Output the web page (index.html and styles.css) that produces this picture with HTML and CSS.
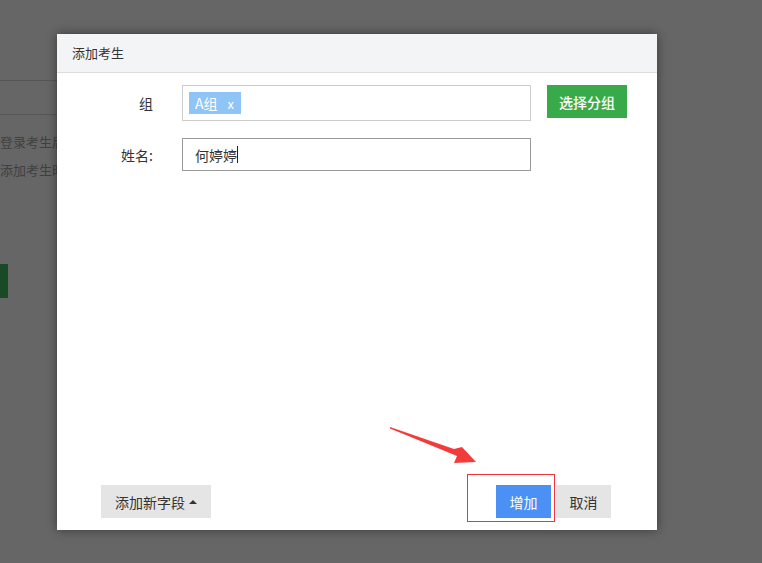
FILE: index.html
```html
<!DOCTYPE html>
<html lang="zh">
<head>
<meta charset="utf-8">
<link rel="stylesheet" href="styles.css">
</head>
<body>
<div class="page">
  <div class="bg-line bg-line-1"></div>
  <div class="bg-line bg-line-2"></div>
  <p class="bg-text bg-text-1">登录考生后台</p>
  <p class="bg-text bg-text-2">添加考生时间</p>
  <div class="bg-btn"></div>
</div>

<div class="modal">
  <div class="modal-header">添加考生</div>
  <div class="modal-body">
    <div class="form">
      <label class="label">组</label>
      <div class="input tags">
        <span class="tag">A组<span class="tag-x">x</span></span>
      </div>
      <button class="btn btn-green">选择分组</button>

      <label class="label">姓名:</label>
      <div class="input text-input">何婷婷<span class="caret"></span></div>
      <span></span>
    </div>
  </div>
  <div class="modal-footer">
    <button class="btn btn-gray">添加新字段<span class="tri"></span></button>
    <div class="actions">
      <button class="btn btn-blue">增加</button>
      <button class="btn btn-gray btn-cancel">取消</button>
    </div>
  </div>
</div>

<div class="highlight"></div>
<svg class="arrow" width="100" height="50" viewBox="0 0 100 50">
  <polygon points="0,1 64,23 72,21 86,36 64,37 67,30 0,2.5" fill="#f23c3c"/>
</svg>
</body>
</html>
```

FILE: styles.css
```css
* { box-sizing: border-box; }
html, body {
  margin: 0;
  padding: 0;
  width: 762px;
  height: 563px;
  overflow: hidden;
  background: #666666;
  font-family: "Noto Sans CJK SC", "Noto Sans", sans-serif;
}
.page {
  position: absolute;
  inset: 0;
}
.bg-line {
  position: absolute;
  left: 0;
  width: 100px;
  height: 1px;
  background: #565656;
}
.bg-line-1 { top: 80px; }
.bg-line-2 { top: 114px; }
.bg-text {
  position: absolute;
  left: 0;
  margin: 0;
  font-size: 13px;
  line-height: 18px;
  color: #404040;
  white-space: nowrap;
}
.bg-text-1 { top: 133px; }
.bg-text-2 { top: 161px; }
.bg-btn {
  position: absolute;
  left: 0;
  top: 264px;
  width: 8px;
  height: 34px;
  background: #1a4a25;
}

.modal {
  position: absolute;
  left: 57px;
  top: 34px;
  width: 600px;
  height: 496px;
  background: #fff;
  box-shadow: 0 0 10px rgba(0,0,0,0.45);
  display: flex;
  flex-direction: column;
}
.modal-header {
  height: 39px;
  background: #f3f4f6;
  border-bottom: 1px solid #dcdcdc;
  padding: 0 15px;
  font-size: 13px;
  line-height: 38px;
  color: #333;
}
.modal-body {
  flex: 1;
  padding-top: 12px;
}
.form {
  display: grid;
  grid-template-columns: 96px 349px 80px;
  grid-template-rows: 36px 33px;
  column-gap: 29px;
  row-gap: 17px;
}
.form .btn-green { margin-left: -13px; }
.label {
  text-align: right;
  font-size: 14px;
  color: #333;
  align-self: center;
}
.input {
  border: 1px solid #cccccc;
  background: #fff;
  display: flex;
  align-items: center;
}
.tags { padding-left: 6px; }
.tag {
  display: inline-flex;
  align-items: center;
  height: 22px;
  width: 52px;
  padding-left: 6px;
  background: #8ec5f6;
  color: #fff;
  font-size: 14px;
}
.tag-x {
  margin-left: 10px;
  font-size: 13px;
}
.text-input {
  border-color: #9a9a9a;
  padding-left: 12px;
  font-size: 14px;
  color: #333;
}
.caret {
  display: inline-block;
  width: 1px;
  height: 17px;
  background: #222;
}
.btn {
  border: none;
  font-family: inherit;
  font-size: 14px;
  height: 33px;
  padding: 0;
  cursor: pointer;
}
.btn-green {
  width: 80px;
  background: #39aa4a;
  color: #fff;
  font-weight: 500;
}
.modal-footer {
  display: flex;
  justify-content: space-between;
  align-items: center;
  padding: 0 46px 12px 44px;
}
.btn-gray {
  background: #e5e5e5;
  color: #333;
}
.modal-footer > .btn-gray {
  width: 110px;
  display: inline-flex;
  align-items: center;
  justify-content: center;
}
.tri {
  display: inline-block;
  margin-left: 4px;
  width: 0;
  height: 0;
  border-left: 4px solid transparent;
  border-right: 4px solid transparent;
  border-bottom: 4px solid #333;
}
.actions {
  display: flex;
  gap: 5px;
}
.btn-blue {
  width: 55px;
  background: #4a90f5;
  color: #fff;
}
.btn-cancel { width: 55px; }

.highlight {
  position: absolute;
  left: 467px;
  top: 474px;
  width: 88px;
  height: 48px;
  border: 1px solid #f0333a;
}
.arrow {
  position: absolute;
  left: 390px;
  top: 426px;
}
```
